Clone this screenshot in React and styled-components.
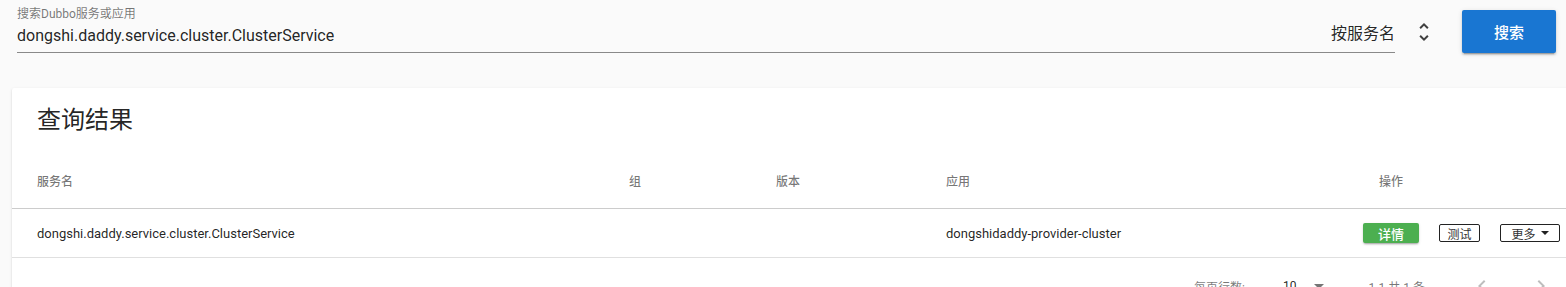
import styled, { createGlobalStyle } from "styled-components";

const GlobalStyle = createGlobalStyle`
  html, body {
    margin: 0;
    padding: 0;
    background: #fafafa;
    overflow: hidden;
  }
  body {
    font-family: Roboto, "Noto Sans CJK SC", sans-serif;
    color: rgba(0, 0, 0, 0.87);
  }
  * { box-sizing: border-box; }
`;

const Page = styled.div`
  width: 100%;
  padding-bottom: 40px;
`;

const SearchBar = styled.div`
  display: flex;
  align-items: flex-start;
  height: 88px;
  padding: 0 10px 0 17px;
`;

const SearchField = styled.div`
  flex: 1;
  display: flex;
  flex-direction: column;
  padding-top: 8px;
  height: 53px;
  border-bottom: 1px solid rgba(0, 0, 0, 0.45);
`;

const FieldLabel = styled.label`
  font-size: 12px;
  line-height: 12px;
  color: rgba(0, 0, 0, 0.54);
`;

const FieldInput = styled.input`
  margin-top: 5px;
  border: none;
  outline: none;
  background: transparent;
  padding: 0;
  height: 20px;
  font-family: Roboto, "Noto Sans CJK SC", sans-serif;
  font-size: 16px;
  color: rgba(0, 0, 0, 0.87);
  width: 100%;
`;

const TypeSelect = styled.div`
  width: 150px;
  height: 53px;
  display: flex;
  align-items: flex-end;
  justify-content: flex-end;
  padding-bottom: 8px;
  border-bottom: 1px solid rgba(0, 0, 0, 0.45);
  font-size: 16px;
  line-height: 20px;
  color: rgba(0, 0, 0, 0.87);
`;

const SelectIcon = styled.svg`
  width: 24px;
  height: 24px;
  margin: 20px 0 0 17px;
  fill: rgba(0, 0, 0, 0.75);
`;

const SearchButton = styled.button`
  margin: 10px 0 0 26px;
  width: 94px;
  height: 43px;
  border: none;
  border-radius: 2px;
  background: #1976d2;
  color: #fff;
  font-family: Roboto, "Noto Sans CJK SC", sans-serif;
  font-size: 15px;
  font-weight: 500;
  box-shadow: 0 3px 1px -2px rgba(0, 0, 0, 0.2), 0 2px 2px 0 rgba(0, 0, 0, 0.14),
    0 1px 5px 0 rgba(0, 0, 0, 0.12);
`;

const Card = styled.section`
  margin-left: 12px;
  width: 1600px;
  background: #fff;
  border-radius: 2px;
  box-shadow: 0 2px 1px -1px rgba(0, 0, 0, 0.2), 0 1px 1px 0 rgba(0, 0, 0, 0.14),
    0 1px 3px 0 rgba(0, 0, 0, 0.12);
`;

const CardTitle = styled.h2`
  margin: 0;
  padding: 16px 25px;
  font-size: 24px;
  line-height: 32px;
  font-weight: 400;
  color: rgba(0, 0, 0, 0.87);
`;

const Row = styled.div`
  display: grid;
  grid-template-columns: 592px 147px 170px 433px 1fr;
  align-items: center;
  padding-left: 1px;
  height: ${(p) => (p.$head ? "57px" : "49px")};
  border-bottom: 1px solid
    ${(p) => (p.$head ? "rgba(0, 0, 0, 0.2)" : "rgba(0, 0, 0, 0.12)")};
`;

const HeadCell = styled.div`
  padding-left: 24px;
  font-size: 12px;
  font-weight: 500;
  color: rgba(0, 0, 0, 0.54);
`;

const Cell = styled.div`
  padding-left: ${(p) => p.$pad || "24px"};
  font-size: 13px;
  color: rgba(0, 0, 0, 0.87);
  display: flex;
  align-items: center;
  gap: 20px;
`;

const DetailButton = styled.button`
  width: 56px;
  height: 20px;
  padding: 0;
  border: none;
  border-radius: 2px;
  background: #4caf50;
  color: #fff;
  font-family: Roboto, "Noto Sans CJK SC", sans-serif;
  font-size: 13px;
  font-weight: 500;
  box-shadow: 0 2px 2px -1px rgba(0, 0, 0, 0.3), 0 1px 3px 0 rgba(0, 0, 0, 0.12);
`;

const OutlineButton = styled.button`
  width: ${(p) => p.$w};
  height: 18px;
  padding: 0;
  display: flex;
  align-items: center;
  justify-content: center;
  gap: 5px;
  border: 1px solid #222;
  border-radius: 2px;
  background: #fff;
  color: #333;
  font-family: Roboto, "Noto Sans CJK SC", sans-serif;
  font-size: 12px;
`;

const Caret = styled.span`
  width: 0;
  height: 0;
  border-left: 4px solid transparent;
  border-right: 4px solid transparent;
  border-top: 4px solid #222;
`;

const Footer = styled.div`
  display: flex;
  align-items: center;
  justify-content: flex-end;
  height: 56px;
  padding-right: 59px;
  font-size: 12px;
  color: rgba(0, 0, 0, 0.54);
`;

const PerPage = styled.div`
  display: flex;
  align-items: center;
  margin-left: 38px;
  color: rgba(0, 0, 0, 0.87);
`;

const PageInfo = styled.span`
  margin: 0 45px 0 38px;
`;

const PageIcon = styled.svg`
  width: 24px;
  height: 24px;
  margin-left: ${(p) => p.$ml || "0"};
  fill: rgba(0, 0, 0, 0.26);
`;

const DropIcon = styled.svg`
  width: 24px;
  height: 24px;
  margin-left: 10px;
  fill: rgba(0, 0, 0, 0.54);
`;

export default function App() {
  return (
    <Page>
      <GlobalStyle />
      <SearchBar>
        <SearchField>
          <FieldLabel>搜索Dubbo服务或应用</FieldLabel>
          <FieldInput readOnly defaultValue="dongshi.daddy.service.cluster.ClusterService" />
        </SearchField>
        <TypeSelect>按服务名</TypeSelect>
        <SelectIcon viewBox="0 0 24 24">
          <path d="M12 5.83L15.17 9l1.41-1.41L12 3 7.41 7.59 8.83 9 12 5.83zm0 12.34L8.83 15l-1.41 1.41L12 21l4.59-4.59L15.17 15 12 18.17z" />
        </SelectIcon>
        <SearchButton>搜索</SearchButton>
      </SearchBar>

      <Card>
        <CardTitle>查询结果</CardTitle>
        <Row $head>
          <HeadCell>服务名</HeadCell>
          <HeadCell>组</HeadCell>
          <HeadCell>版本</HeadCell>
          <HeadCell>应用</HeadCell>
          <HeadCell>操作</HeadCell>
        </Row>
        <Row>
          <Cell>dongshi.daddy.service.cluster.ClusterService</Cell>
          <Cell />
          <Cell />
          <Cell>dongshidaddy-provider-cluster</Cell>
          <Cell $pad="8px">
            <DetailButton>详情</DetailButton>
            <OutlineButton $w="41px">测试</OutlineButton>
            <OutlineButton $w="60px">
              更多 <Caret />
            </OutlineButton>
          </Cell>
        </Row>
        <Footer>
          <span>每页行数:</span>
          <PerPage>
            10
            <DropIcon viewBox="0 0 24 24">
              <path d="M7 10l5 5 5-5z" />
            </DropIcon>
          </PerPage>
          <PageInfo>1-1 共 1 条</PageInfo>
          <PageIcon viewBox="0 0 24 24">
            <path d="M15.41 7.41L14 6l-6 6 6 6 1.41-1.41L10.83 12z" />
          </PageIcon>
          <PageIcon viewBox="0 0 24 24" $ml="35px">
            <path d="M10 6L8.59 7.41 13.17 12l-4.58 4.59L10 18l6-6z" />
          </PageIcon>
        </Footer>
      </Card>
    </Page>
  );
}
